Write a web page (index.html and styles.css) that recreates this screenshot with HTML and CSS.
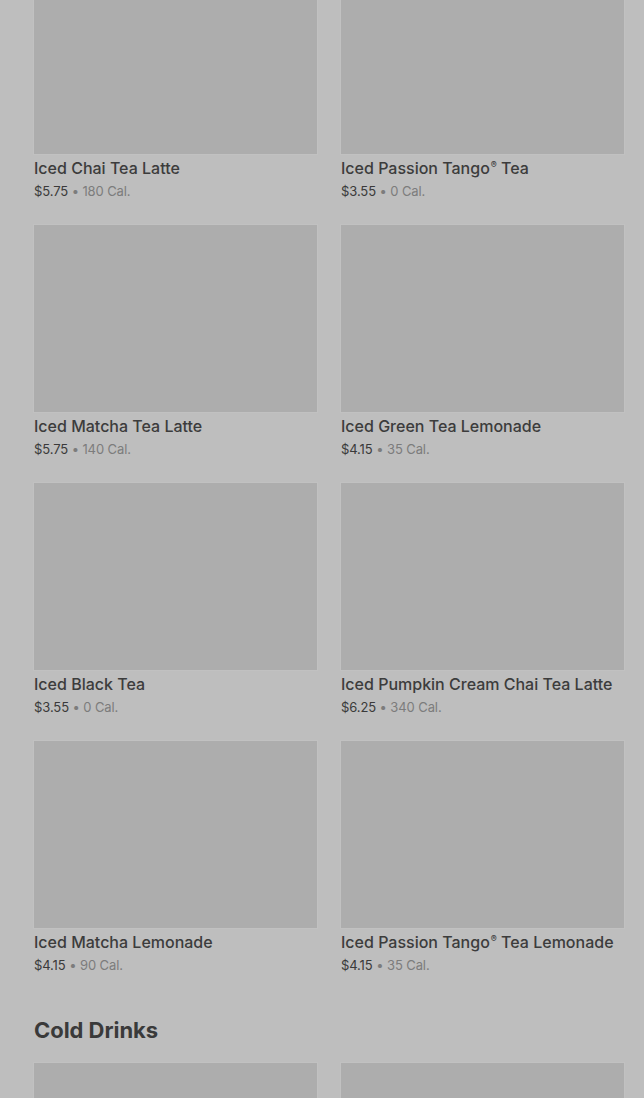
FILE: index.html
```html
<!DOCTYPE html>
<html lang="en">
<head>
    <meta charset="UTF-8">
    <meta name="viewport" content="width=device-width, initial-scale=1.0">
    <title>Menu - Iced Teas</title>
    <link rel="stylesheet" href="styles.css">
</head>
<body>
    <div class="menu">
        <section class="category">
            <div class="product-grid">
                <div class="product">
                    <div class="product-image"></div>
                    <div class="product-name">Iced Chai Tea Latte</div>
                    <div class="product-info"><span class="price">$5.75</span> • 180 Cal.</div>
                </div>
                <div class="product">
                    <div class="product-image"></div>
                    <div class="product-name">Iced Passion Tango<sup>®</sup> Tea</div>
                    <div class="product-info"><span class="price">$3.55</span> • 0 Cal.</div>
                </div>
                <div class="product">
                    <div class="product-image"></div>
                    <div class="product-name">Iced Matcha Tea Latte</div>
                    <div class="product-info"><span class="price">$5.75</span> • 140 Cal.</div>
                </div>
                <div class="product">
                    <div class="product-image"></div>
                    <div class="product-name">Iced Green Tea Lemonade</div>
                    <div class="product-info"><span class="price">$4.15</span> • 35 Cal.</div>
                </div>
                <div class="product">
                    <div class="product-image"></div>
                    <div class="product-name">Iced Black Tea</div>
                    <div class="product-info"><span class="price">$3.55</span> • 0 Cal.</div>
                </div>
                <div class="product">
                    <div class="product-image"></div>
                    <div class="product-name">Iced Pumpkin Cream Chai Tea Latte</div>
                    <div class="product-info"><span class="price">$6.25</span> • 340 Cal.</div>
                </div>
                <div class="product">
                    <div class="product-image"></div>
                    <div class="product-name">Iced Matcha Lemonade</div>
                    <div class="product-info"><span class="price">$4.15</span> • 90 Cal.</div>
                </div>
                <div class="product">
                    <div class="product-image"></div>
                    <div class="product-name">Iced Passion Tango<sup>®</sup> Tea Lemonade</div>
                    <div class="product-info"><span class="price">$4.15</span> • 35 Cal.</div>
                </div>
            </div>
        </section>

        <section class="category">
            <h2>Cold Drinks</h2>
            <div class="product-grid">
                <div class="product">
                    <div class="product-image"></div>
                </div>
                <div class="product">
                    <div class="product-image"></div>
                </div>
            </div>
        </section>
    </div>
</body>
</html>
```

FILE: styles.css
```css
html, body {
    height: 100%;
}
body {
    margin: 0;
    overflow: hidden;
    font-family: Inter, Roboto, "Liberation Sans", sans-serif;
    background-color: #bebebe;
    color: #3a3a3a;
}
.menu {
    margin-top: -33px;
    padding: 0 20px 0 34px;
}
.product-grid {
    display: grid;
    grid-template-columns: 1fr 1fr;
    column-gap: 24px;
    row-gap: 25px;
}
.product-image {
    height: 187px;
    background-color: #adadad;
    box-shadow: 0 0 0 1px rgba(255,255,255,0.06);
}
.product-name {
    margin-top: 4px;
    font-size: 16px;
    line-height: 20px;
    font-weight: 500;
    color: #3c3c3c;
}
.product-name sup {
    font-size: 9px;
    line-height: 0;
    vertical-align: 6px;
    margin-left: 1px;
}
.product-info {
    margin-top: 4px;
    font-size: 13px;
    line-height: 18px;
    letter-spacing: -0.1px;
    color: #7c7c7c;
}
.price {
    color: #3a3a3a;
}
h2 {
    margin: 42px 0 19px;
    font-size: 22px;
    line-height: 28px;
    font-weight: 700;
    letter-spacing: -0.05px;
    color: #3a3a3a;
}
```
